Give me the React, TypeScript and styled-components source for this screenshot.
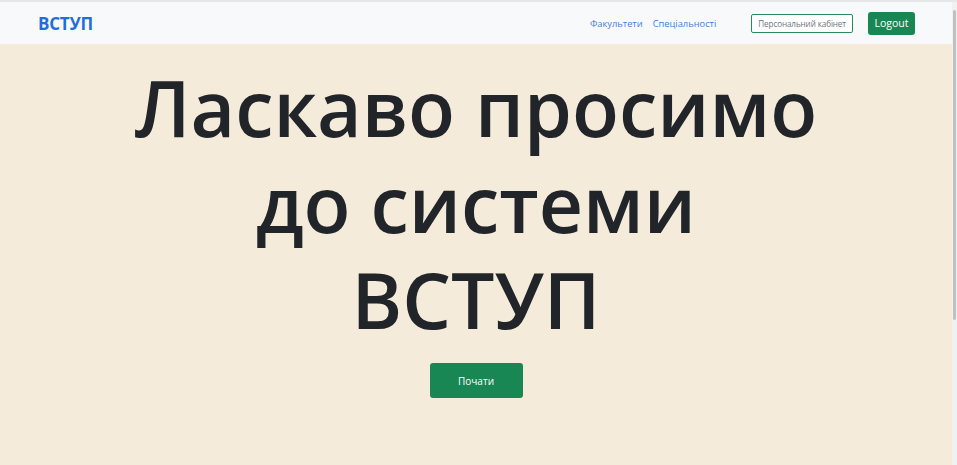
import React from "react";
import styled, { createGlobalStyle } from "styled-components";

const Global = createGlobalStyle`
  html, body { margin: 0; padding: 0; height: 100%; overflow: hidden; }
  body { font-family: "Open Sans", "Noto Sans", sans-serif; background: #f4ebdb; }
  #root { height: 100%; }
`;

const Frame = styled.div`
  display: flex;
  height: 465px;
  border-top: 2px solid #e6e7e8;
  box-sizing: border-box;
`;

const Page = styled.div`
  flex: 1;
  display: flex;
  flex-direction: column;
  min-width: 0;
`;

const Scrollbar = styled.div`
  width: 5px;
  background: #f1f1f1;
  display: flex;
  flex-direction: column;
  padding: 8px 1px 0 1px;
  box-sizing: border-box;
`;

const Thumb = styled.div`
  height: 310px;
  background: #c1c1c1;
  border-radius: 2px;
`;

const Navbar = styled.nav`
  height: 42px;
  background: #f8f9fa;
  display: flex;
  align-items: center;
  padding: 0 37px 0 38px;
`;

const Brand = styled.a`
  font-family: "Open Sans", sans-serif;
  font-weight: 700;
  font-size: 17px;
  color: #1f6fd8;
  letter-spacing: -0.2px;
  text-decoration: none;
`;

const NavLinks = styled.div`
  margin-left: auto;
  display: flex;
  align-items: center;
  gap: 10px;
`;

const NavLink = styled.a`
  font-size: 9.3px;
  color: #3f7fdc;
  text-decoration: none;
`;

const Actions = styled.div`
  display: flex;
  align-items: center;
  margin-left: 35px;
  gap: 15px;
`;

const OutlineButton = styled.button`
  height: 19px;
  padding: 0 6px;
  border: 1px solid #2b8a5e;
  border-radius: 2px;
  background: #fff;
  color: #6c757d;
  font-family: "Open Sans", sans-serif;
  font-size: 8.1px;
  letter-spacing: -0.1px;
`;

const SolidButton = styled.button<{ $w: number; $h: number; $fs: number }>`
  width: ${(p) => p.$w}px;
  height: ${(p) => p.$h}px;
  border: none;
  border-radius: 3px;
  background: #198754;
  color: #fff;
  font-family: "Open Sans", sans-serif;
  font-size: ${(p) => p.$fs}px;
  padding: 0;
`;

const Hero = styled.main`
  flex: 1;
  display: flex;
  flex-direction: column;
  align-items: center;
  padding-top: 16px;
`;

const Title = styled.h1`
  margin: 0 0 15px 0;
  font-family: "Open Sans", sans-serif;
  font-weight: 600;
  font-size: 77px;
  line-height: 96px;
  letter-spacing: 0px;
  color: #212529;
  text-align: center;
`;

export default function App() {
  return (
    <>
      <Global />
      <Frame>
        <Page>
          <Navbar>
            <Brand href="#">ВСТУП</Brand>
            <NavLinks>
              <NavLink href="#">Факультети</NavLink>
              <NavLink href="#">Спеціальності</NavLink>
            </NavLinks>
            <Actions>
              <OutlineButton>Персональний кабінет</OutlineButton>
              <SolidButton $w={47} $h={23} $fs={10.5}>Logout</SolidButton>
            </Actions>
          </Navbar>
          <Hero>
            <Title>
              Ласкаво просимо
              <br />
              до системи
              <br />
              ВСТУП
            </Title>
            <SolidButton $w={93} $h={35} $fs={10}>Почати</SolidButton>
          </Hero>
        </Page>
        <Scrollbar>
          <Thumb />
        </Scrollbar>
      </Frame>
    </>
  );
}
